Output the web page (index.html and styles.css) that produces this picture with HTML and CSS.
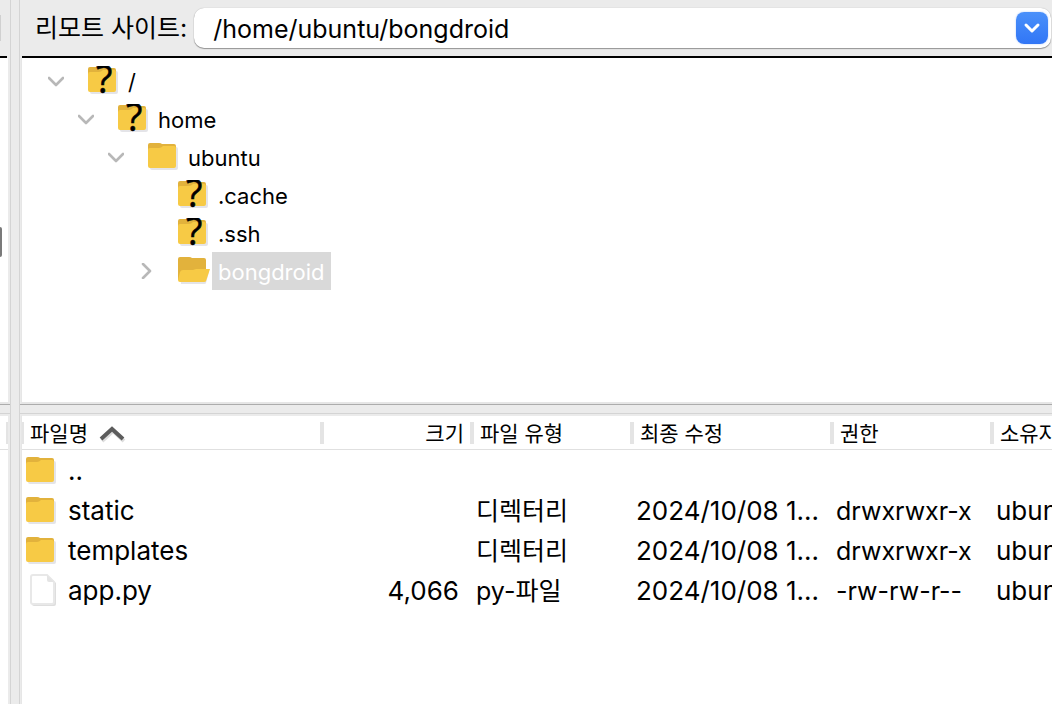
FILE: index.html
```html
<!DOCTYPE html>
<html lang="ko">

<head>
    <meta charset="UTF-8" />
    <meta name="viewport" content="width=device-width, initial-scale=1.0" />
    <title>/home/ubuntu/bongdroid</title>
    <link rel="stylesheet" href="styles.css">
</head>

<body>
    <!-- shared icons -->
    <svg class="sprite" aria-hidden="true">
        <symbol id="folder" viewBox="0 0 32 30">
            <path d="M2 5h26q2 0 2 2v19q0 2-2 2H4q-2 0-2-2z" fill="#e4e4e8" />
            <path d="M0 3q0-2 2-2h9q2 0 3 1h12q2 0 2 2v5H0z" fill="#e2b23c" />
            <path d="M0 8q0-2 2-2h9q2 0 4-2h11q2 0 2 2v18q0 2-2 2H2q-2 0-2-2z" fill="#f7ca45" />
        </symbol>
        <symbol id="folder-unknown" viewBox="0 0 32 30">
            <path d="M2 5h26q2 0 2 2v19q0 2-2 2H4q-2 0-2-2z" fill="#e4e4e8" />
            <path d="M0 3q0-2 2-2h9q2 0 3 1h12q2 0 2 2v5H0z" fill="#e2b23c" />
            <path d="M0 8q0-2 2-2h9q2 0 4-2h11q2 0 2 2v18q0 2-2 2H2q-2 0-2-2z" fill="#f7ca45" />
            <text x="8" y="27" font-family="Open Sans" font-size="38" stroke="#000" stroke-width="0.5">?</text>
        </symbol>
        <symbol id="folder-open" viewBox="0 0 32 30">
            <path d="M2 16h29l-3 11q0 1-2 1H3z" fill="#e4e4e8" />
            <path d="M0 3q0-2 2-2h9q2 0 3 1h12q2 0 2 2v20H0z" fill="#e2b23c" />
            <path d="M5 14h10l3-1h14l-4 12q0 1-2 1H2q-2 0-2-2l2-8q1-2 3-2z" fill="#f7ca45" />
        </symbol>
        <symbol id="file" viewBox="0 0 32 34">
            <path d="M6 3h18l6 6v21q0 2-2 2H8q-2 0-2-2z" fill="#dedede" />
            <path d="M7 1h14l7 7v20q0 2-2 2H7q-2 0-2-2V3q0-2 2-2z" fill="#fff" stroke="#e8e8e8" stroke-width="2" />
            <path d="M21 1v5q0 2 2 2h5z" fill="#e4e4e4" />
        </symbol>
        <symbol id="chevron" viewBox="0 0 16 16">
            <path d="M1 5l7 7 7-7" fill="none" stroke="currentColor" stroke-width="2.6" stroke-linecap="round" stroke-linejoin="round" />
        </symbol>
    </svg>

    <div class="panes">
        <!-- right edge of the local side -->
        <section class="pane local">
            <div class="site-bar"></div>
            <div class="tree"></div>
            <div class="splitter"></div>
            <div class="files">
                <div class="files-head"></div>
            </div>
        </section>

        <section class="pane remote">
            <div class="site-bar">
                <label for="remotePath">리모트 사이트:</label>
                <div class="combo">
                    <input type="text" id="remotePath" value="/home/ubuntu/bongdroid" />
                    <button type="button" class="combo-button" aria-label="경로 목록">
                        <svg viewBox="0 0 32 32">
                            <path d="M10 13l6 6 6-6" fill="none" stroke="#fff" stroke-width="3" stroke-linecap="round" stroke-linejoin="round" />
                        </svg>
                    </button>
                </div>
            </div>

            <div class="tree">
                <ul>
                    <li>
                        <div class="node">
                            <button type="button" class="toggle" aria-label="접기"><svg><use href="#chevron" /></svg></button>
                            <svg class="icon"><use href="#folder-unknown" /></svg>
                            <span class="name">/</span>
                        </div>
                        <ul>
                            <li>
                                <div class="node">
                                    <button type="button" class="toggle" aria-label="접기"><svg><use href="#chevron" /></svg></button>
                                    <svg class="icon"><use href="#folder-unknown" /></svg>
                                    <span class="name">home</span>
                                </div>
                                <ul>
                                    <li>
                                        <div class="node">
                                            <button type="button" class="toggle" aria-label="접기"><svg><use href="#chevron" /></svg></button>
                                            <svg class="icon"><use href="#folder" /></svg>
                                            <span class="name">ubuntu</span>
                                        </div>
                                        <ul>
                                            <li>
                                                <div class="node leaf">
                                                    <svg class="icon"><use href="#folder-unknown" /></svg>
                                                    <span class="name">.cache</span>
                                                </div>
                                            </li>
                                            <li>
                                                <div class="node leaf">
                                                    <svg class="icon"><use href="#folder-unknown" /></svg>
                                                    <span class="name">.ssh</span>
                                                </div>
                                            </li>
                                            <li>
                                                <div class="node selected">
                                                    <button type="button" class="toggle closed" aria-label="펼치기"><svg><use href="#chevron" /></svg></button>
                                                    <svg class="icon"><use href="#folder-open" /></svg>
                                                    <span class="name">bongdroid</span>
                                                </div>
                                            </li>
                                        </ul>
                                    </li>
                                </ul>
                            </li>
                        </ul>
                    </li>
                </ul>
            </div>

            <div class="splitter"></div>

            <div class="files">
                <table>
                    <colgroup>
                        <col class="col-name">
                        <col class="col-size">
                        <col class="col-type">
                        <col class="col-date">
                        <col class="col-perm">
                        <col class="col-owner">
                    </colgroup>
                    <thead>
                        <tr>
                            <th>
                                <div class="head">파일명
                                    <svg class="sort" viewBox="0 0 28 18">
                                        <path d="M3 16L14 6l11 10" fill="none" stroke="#ddd" stroke-width="4" />
                                        <path d="M2 14L13 4l11 10" fill="none" stroke="#5c5c5c" stroke-width="4" />
                                    </svg>
                                </div>
                            </th>
                            <th class="size"><div class="head">크기</div></th>
                            <th><div class="head">파일 유형</div></th>
                            <th><div class="head">최종 수정</div></th>
                            <th><div class="head">권한</div></th>
                            <th><div class="head">소유자</div></th>
                        </tr>
                    </thead>
                    <tbody>
                        <tr>
                            <td><div class="file"><svg class="icon"><use href="#folder" /></svg>..</div></td>
                            <td class="size"></td>
                            <td class="type"></td>
                            <td></td>
                            <td class="perm"></td>
                            <td></td>
                        </tr>
                        <tr>
                            <td><div class="file"><svg class="icon"><use href="#folder" /></svg>static</div></td>
                            <td class="size"></td>
                            <td class="type">디렉터리</td>
                            <td>2024/10/08 1...</td>
                            <td class="perm">drwxrwxr-x</td>
                            <td>ubuntu</td>
                        </tr>
                        <tr>
                            <td><div class="file"><svg class="icon"><use href="#folder" /></svg>templates</div></td>
                            <td class="size"></td>
                            <td class="type">디렉터리</td>
                            <td>2024/10/08 1...</td>
                            <td class="perm">drwxrwxr-x</td>
                            <td>ubuntu</td>
                        </tr>
                        <tr>
                            <td><div class="file"><svg class="icon page"><use href="#file" /></svg>app.py</div></td>
                            <td class="size">4,066</td>
                            <td class="type">py-파일</td>
                            <td>2024/10/08 1...</td>
                            <td class="perm">-rw-rw-r--</td>
                            <td>ubuntu</td>
                        </tr>
                    </tbody>
                </table>
            </div>
        </section>
    </div>
</body>

</html>
```
FILE: styles.css
```css
* {
    box-sizing: border-box;
}

body {
    margin: 0;
    font-family: Inter, "Noto Sans CJK KR", sans-serif;
    font-size: 26px;
    color: #000;
    background: #ebebeb;
}

ul {
    list-style: none;
    margin: 0;
    padding: 0;
}

button {
    border: none;
    padding: 0;
    background: none;
}

.sprite {
    display: none;
}

.panes {
    display: grid;
    grid-template-columns: 11px minmax(0, 1fr);
    gap: 8px;
    height: 100vh;
    overflow: hidden;
}

.pane {
    display: flex;
    flex-direction: column;
    min-width: 0;
}

.remote {
    border-left: 1px solid #d4d4d4;
}

.local {
    border-right: 1px solid #d4d4d4;
}

.site-bar {
    display: flex;
    align-items: center;
    height: 58px;
    padding: 0 1px 0 13px;
    border-bottom: 2px solid #000;
    margin-left: 2px;
    flex-shrink: 0;
}

.site-bar label {
    font-size: 25px;
    line-height: 36px;
    white-space: nowrap;
    margin-right: 7px;
}

/* path box */
.combo {
    display: flex;
    align-items: center;
    flex: 1;
    height: 40px;
    padding-right: 3px;
    background: #fff;
    border-radius: 10px;
    box-shadow: 0 1px 1px rgba(0, 0, 0, 0.35), 0 0 1px rgba(0, 0, 0, 0.3);
}

.combo input {
    flex: 1;
    min-width: 0;
    border: none;
    outline: none;
    background: none;
    padding: 2px 19px 0;
    font-family: inherit;
    font-size: 25px;
    color: inherit;
}

.combo-button {
    width: 32px;
    height: 32px;
    border-radius: 8px;
    background: linear-gradient(#4a90fa, #3176f6);
    box-shadow: 0 0 2px rgba(49, 118, 246, 0.4);
}

.combo-button svg {
    display: block;
}

/* directory tree */
.tree {
    height: 346px;
    margin-left: 1px;
    padding: 4px 0 0 22px;
    background: #fff;
    border-left: 1px solid #e6e6e6;
    border-bottom: 2px solid #e6e6e6;
    flex-shrink: 0;
}

.tree ul ul {
    padding-left: 30px;
}

.node {
    display: flex;
    align-items: center;
    height: 38px;
    font-size: 22px;
}

.node.leaf {
    padding-left: 44px;
}

.toggle {
    width: 24px;
    height: 24px;
    margin-right: 20px;
    color: #b8b8b8;
}

.toggle svg {
    display: block;
    width: 16px;
    height: 16px;
    margin: 0 auto;
    overflow: visible;
}

.toggle.closed svg {
    transform: rotate(-90deg);
}

.icon {
    width: 32px;
    height: 30px;
    flex-shrink: 0;
    overflow: visible;
}

.node .name {
    line-height: 36px;
    margin-left: 2px;
    padding: 2px 6px 0;
}

.node.selected .name {
    background: #d9d9d9;
    color: #fff;
}

.splitter {
    height: 10px;
    border-top: 1px solid #acacac;
    border-bottom: 1px solid #d4d4d4;
    flex-shrink: 0;
}

/* file list */
.files {
    flex: 1;
    min-height: 0;
    overflow: hidden;
    margin-left: 1px;
    background: #fff;
    border-top: 2px solid #ebebeb;
    border-left: 1px solid #e6e6e6;
}

table {
    table-layout: fixed;
    width: 1132px;
    border-collapse: separate;
    border-spacing: 0;
}

.col-name {
    width: 302px;
}

.col-size {
    width: 150px;
}

.col-type,
.col-perm,
.col-owner {
    width: 160px;
}

.col-date {
    width: 200px;
}

th {
    height: 34px;
    padding: 0;
    border-bottom: 1px solid #e0e0e0;
    font-size: 21px;
    font-weight: 400;
    text-align: left;
}

.head {
    display: flex;
    align-items: center;
    height: 22px;
    line-height: 20px;
    padding: 2px 6px 0;
    border-right: 4px solid #e4e4e4;
}

th:first-child .head {
    border-left: 2px solid #e4e4e4;
}

.size .head {
    justify-content: flex-end;
}

.sort {
    width: 28px;
    height: 18px;
    margin-left: 11px;
}

td {
    height: 40px;
    padding: 2px 2px 0;
    line-height: 38px;
    white-space: nowrap;
}

td.size {
    padding-right: 15px;
    text-align: right;
}

td.type,
td.perm {
    font-size: 25px;
}

.file {
    display: flex;
    align-items: center;
    gap: 10px;
    padding-left: 2px;
}

.page {
    height: 34px;
}

/* the local side shows only its scrollbar edge */
.local .site-bar {
    margin: 0 3px 0 0;
    padding: 0;
}

.local .site-bar::before {
    content: "";
    width: 1px;
    height: 26px;
    background: #d0d0d0;
}

.local .tree,
.local .files {
    margin: 0;
    padding: 0;
    border-left: none;
    border-right: 2px solid #ebebeb;
}

.local .tree {
    display: flex;
    align-items: center;
}

.local .tree::before {
    content: "";
    width: 2px;
    height: 30px;
    margin-top: 24px;
    background: #7a7a7a;
    border-radius: 0 4px 4px 0;
}

.files-head {
    height: 34px;
    padding: 6px 0;
    border-bottom: 1px solid #e0e0e0;
}

.files-head::before {
    content: "";
    display: block;
    width: 2px;
    height: 22px;
    margin-left: auto;
    background: #e4e4e4;
}
```
